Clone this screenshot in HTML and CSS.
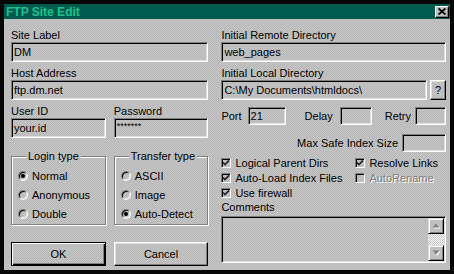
FILE: index.html
```html
<!DOCTYPE html>
<html lang="en">
<head>
  <meta charset="UTF-8">
  <link rel="stylesheet" href="styles.css">
  <title>FTP Site Edit</title>
</head>
<body>
  <div class="window">
    <header class="titlebar">
      <span class="title">FTP Site Edit</span>
      <button class="close-button">
        <svg width="8" height="7" viewBox="0 0 8 7"><path d="M0.5 0.5 L7.5 6.5 M7.5 0.5 L0.5 6.5" stroke="#000" stroke-width="1.8" fill="none"/></svg>
      </button>
    </header>
    <main class="dialog">
      <section class="left-col">
        <label class="caption">Site Label</label>
        <div class="field">DM</div>
        <label class="caption">Host Address</label>
        <div class="field">ftp.dm.net</div>
        <div class="pair">
          <div>
            <label class="caption">User ID</label>
            <div class="field">your.id</div>
          </div>
          <div>
            <label class="caption">Password</label>
            <div class="field password">*******</div>
          </div>
        </div>
        <div class="pair groups">
          <fieldset class="group">
            <legend>Login type</legend>
            <div class="option"><span class="radio checked"></span>Normal</div>
            <div class="option"><span class="radio"></span>Anonymous</div>
            <div class="option"><span class="radio"></span>Double</div>
          </fieldset>
          <fieldset class="group">
            <legend>Transfer type</legend>
            <div class="option"><span class="radio"></span>ASCII</div>
            <div class="option"><span class="radio"></span>Image</div>
            <div class="option"><span class="radio checked"></span>Auto-Detect</div>
          </fieldset>
        </div>
        <div class="pair buttons">
          <button class="push-button default">OK</button>
          <button class="push-button">Cancel</button>
        </div>
      </section>

      <section class="right-col">
        <label class="caption">Initial Remote Directory</label>
        <div class="field">web_pages</div>
        <label class="caption">Initial Local Directory</label>
        <div class="browse-row">
          <div class="field grow">C:\My Documents\htmldocs\</div>
          <button class="push-button small">?</button>
        </div>
        <div class="numbers-row">
          <span class="port-label">Port</span>
          <div class="field short port">21</div>
          <span class="delay-label">Delay</span>
          <div class="field short delay"></div>
          <span class="retry-label">Retry</span>
          <div class="field short retry"></div>
        </div>
        <div class="max-row">
          <span>Max Safe Index Size</span>
          <div class="field short max"></div>
        </div>
        <div class="checks">
          <div class="option"><span class="check"><svg width="8" height="8" viewBox="0 0 8 8"><path d="M1 3.5 L3 5.6 L7 1.4" stroke="#222" stroke-width="1.6" fill="none"/></svg></span>Logical Parent Dirs</div>
          <div class="option"><span class="check"><svg width="8" height="8" viewBox="0 0 8 8"><path d="M1 3.5 L3 5.6 L7 1.4" stroke="#222" stroke-width="1.6" fill="none"/></svg></span>Resolve Links</div>
          <div class="option"><span class="check"><svg width="8" height="8" viewBox="0 0 8 8"><path d="M1 3.5 L3 5.6 L7 1.4" stroke="#222" stroke-width="1.6" fill="none"/></svg></span>Auto-Load Index Files</div>
          <div class="option disabled"><span class="check"></span>AutoRename</div>
          <div class="option"><span class="check"><svg width="8" height="8" viewBox="0 0 8 8"><path d="M1 3.5 L3 5.6 L7 1.4" stroke="#222" stroke-width="1.6" fill="none"/></svg></span>Use firewall</div>
        </div>
        <label class="caption">Comments</label>
        <div class="field memo">
          <div class="scrollbar">
            <div class="scroll-button">
              <svg width="9" height="6" viewBox="0 0 9 6"><path d="M1.5 5.5 L5 1.5 L8.5 5.5 Z" fill="#fff"/><path d="M0.5 4.5 L4 0.5 L7.5 4.5 Z" fill="#808080"/></svg>
            </div>
            <div class="scroll-track"></div>
            <div class="scroll-button">
              <svg width="9" height="6" viewBox="0 0 9 6"><path d="M1.5 1.5 L5 5.5 L8.5 1.5 Z" fill="#fff"/><path d="M0.5 0.5 L4 4.5 L7.5 0.5 Z" fill="#808080"/></svg>
            </div>
          </div>
        </div>
      </section>
    </main>
  </div>
</body>
</html>
```

FILE: styles.css
```css
body {
  margin: 0;
  font-family: "Liberation Sans", Arial, sans-serif;
  font-size: 11px;
  color: #000;
}

.window {
  width: 454px;
  height: 274px;
  box-sizing: border-box;
  border: 4px solid #060606;
  display: flex;
  flex-direction: column;
  background: repeating-conic-gradient(#c5c5c5 0 25%, #b8b8b8 0 50%) 0 0 / 2px 2px fixed;
}

.titlebar {
  height: 15px;
  flex: none;
  background-color: #005b4f;
  display: flex;
  align-items: center;
  justify-content: space-between;
  padding: 0 1px 0 2px;
}

.title {
  font-size: 12px;
  font-weight: bold;
  color: #1ec28d;
}

.close-button {
  width: 14px;
  height: 12px;
  padding: 0;
  background-color: #c0c0c0;
  border: 1px solid;
  border-color: #fff #000 #000 #fff;
  box-shadow: inset -1px -1px #808080;
  display: flex;
  align-items: center;
  justify-content: center;
}

.dialog {
  flex: 1;
  display: flex;
  gap: 13px;
  padding: 9px 4px 0 7px;
}

.left-col {
  width: 198px;
  display: flex;
  flex-direction: column;
}

.right-col {
  flex: 1;
  display: flex;
  flex-direction: column;
}

.caption {
  display: block;
  height: 14px;
  line-height: 14px;
}

.field {
  height: 20px;
  box-sizing: border-box;
  border: 1px solid;
  border-color: #808080 #fff #fff #808080;
  box-shadow: inset 1px 1px #000, inset -1px -1px #dfdfdf;
  padding: 0 2px;
  line-height: 18px;
  margin-bottom: 4px;
  white-space: nowrap;
  overflow: hidden;
}

.password {
  font-size: 9px;
  line-height: 15px;
}

.pair {
  display: grid;
  grid-template-columns: 1fr 1fr;
  gap: 8px;
}

.groups {
  margin-top: 8px;
}

.group {
  margin: 0;
  min-width: 0;
  padding: 3px 0 1px 6px;
  border: 1px solid #808080;
  box-shadow: inset 1px 1px #fff, 1px 1px #fff;
}

.group legend {
  margin-left: 8px;
  padding: 0 2px;
  line-height: 13px;
  background: repeating-conic-gradient(#c5c5c5 0 25%, #b8b8b8 0 50%) 0 0 / 2px 2px fixed;
}

.option {
  display: flex;
  align-items: center;
  gap: 4px;
  height: 19px;
  white-space: nowrap;
}

.radio {
  width: 10px;
  height: 10px;
  box-sizing: border-box;
  border-radius: 50%;
  border: 1px solid;
  border-color: #808080 #fff #fff #808080;
  box-shadow: inset 1px 1px #000, inset -1px -1px #dfdfdf;
  display: flex;
  align-items: center;
  justify-content: center;
}

.radio.checked::after {
  content: "";
  width: 4px;
  height: 4px;
  border-radius: 50%;
  background-color: #000;
}

.buttons {
  margin-top: 17px;
}

.push-button {
  height: 24px;
  padding: 0;
  font-family: inherit;
  font-size: 11px;
  color: #000;
  background: transparent;
  border: 1px solid;
  border-color: #fff #000 #000 #fff;
  box-shadow: inset -1px -1px #808080, inset 1px 1px #dfdfdf;
}

.push-button.default {
  border-color: #000;
  box-shadow: inset 1px 1px #fff, inset -1px -1px #000, inset -2px -2px #808080;
}

.browse-row {
  display: flex;
  gap: 3px;
}

.grow {
  flex: 1;
}

.push-button.small {
  width: 16px;
  height: 20px;
}

.numbers-row {
  display: flex;
  align-items: center;
  height: 18px;
  margin-top: 3px;
}

.field.short {
  height: 18px;
  line-height: 16px;
  margin-bottom: 0;
}

.port-label {
  margin-right: 6px;
}

.port {
  width: 38px;
}

.delay-label {
  margin-left: 19px;
  margin-right: 7px;
}

.delay {
  width: 32px;
}

.retry-label {
  margin-left: 13px;
  margin-right: 4px;
}

.retry {
  width: 31px;
}

.max-row {
  display: flex;
  align-items: center;
  justify-content: flex-end;
  height: 18px;
  margin-top: 9px;
}

.max {
  width: 44px;
  margin-left: 4px;
}

.checks {
  display: grid;
  grid-template-columns: 134px 1fr;
  grid-auto-rows: 15px;
  margin-top: 3px;
}

.checks .option {
  height: 15px;
}

.check {
  width: 10px;
  height: 10px;
  box-sizing: border-box;
  border: 1px solid;
  border-color: #808080 #fff #fff #808080;
  box-shadow: inset 1px 1px #000;
  display: flex;
  align-items: center;
  justify-content: center;
}

.disabled {
  color: #808080;
  text-shadow: 1px 1px #fff;
}

.memo {
  height: 47px;
  margin-top: 2px;
  padding: 0;
  display: flex;
  justify-content: flex-end;
}

.scrollbar {
  width: 16px;
  margin: 1px 1px 1px 0;
  display: flex;
  flex-direction: column;
}

.scroll-button {
  height: 16px;
  box-sizing: border-box;
  border: 1px solid;
  border-color: #dfdfdf #000 #000 #dfdfdf;
  box-shadow: inset 1px 1px #fff, inset -1px -1px #808080;
  background-color: #c0c0c0;
  display: flex;
  align-items: center;
  justify-content: center;
}

.scroll-track {
  flex: 1;
  background: repeating-conic-gradient(#fff 0 25%, #c0c0c0 0 50%) 0 0 / 2px 2px;
}
```
